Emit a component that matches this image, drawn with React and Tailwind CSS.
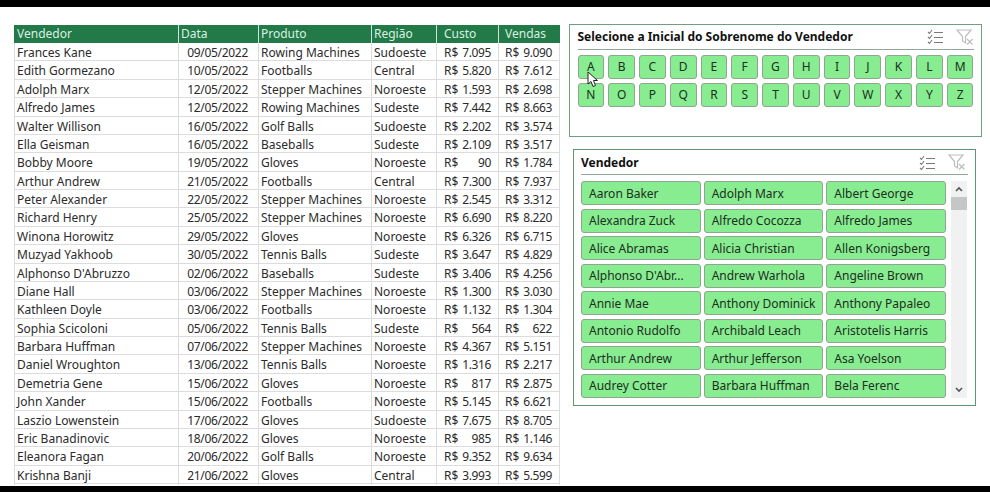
import React from 'react'

const rows = [
  ['Frances Kane', '09/05/2022', 'Rowing Machines', 'Sudoeste', '7.095', '9.090'],
  ['Edith Gormezano', '10/05/2022', 'Footballs', 'Central', '5.820', '7.612'],
  ['Adolph Marx', '12/05/2022', 'Stepper Machines', 'Noroeste', '1.593', '2.698'],
  ['Alfredo James', '12/05/2022', 'Rowing Machines', 'Sudeste', '7.442', '8.663'],
  ['Walter Willison', '16/05/2022', 'Golf Balls', 'Sudoeste', '2.202', '3.574'],
  ['Ella Geisman', '16/05/2022', 'Baseballs', 'Sudeste', '2.109', '3.517'],
  ['Bobby Moore', '19/05/2022', 'Gloves', 'Noroeste', '90', '1.784'],
  ['Arthur Andrew', '21/05/2022', 'Footballs', 'Central', '7.300', '7.937'],
  ['Peter Alexander', '22/05/2022', 'Stepper Machines', 'Noroeste', '2.545', '3.312'],
  ['Richard Henry', '25/05/2022', 'Stepper Machines', 'Noroeste', '6.690', '8.220'],
  ['Winona Horowitz', '29/05/2022', 'Gloves', 'Noroeste', '6.326', '6.715'],
  ['Muzyad Yakhoob', '30/05/2022', 'Tennis Balls', 'Sudeste', '3.647', '4.829'],
  ["Alphonso D'Abruzzo", '02/06/2022', 'Baseballs', 'Sudeste', '3.406', '4.256'],
  ['Diane Hall', '03/06/2022', 'Stepper Machines', 'Noroeste', '1.300', '3.030'],
  ['Kathleen Doyle', '03/06/2022', 'Footballs', 'Noroeste', '1.132', '1.304'],
  ['Sophia Scicoloni', '05/06/2022', 'Tennis Balls', 'Sudeste', '564', '622'],
  ['Barbara Huffman', '07/06/2022', 'Stepper Machines', 'Noroeste', '4.367', '5.151'],
  ['Daniel Wroughton', '13/06/2022', 'Tennis Balls', 'Noroeste', '1.316', '2.217'],
  ['Demetria Gene', '15/06/2022', 'Gloves', 'Noroeste', '817', '2.875'],
  ['John Xander', '15/06/2022', 'Footballs', 'Noroeste', '5.145', '6.621'],
  ['Laszio Lowenstein', '17/06/2022', 'Gloves', 'Sudoeste', '7.675', '8.705'],
  ['Eric Banadinovic', '18/06/2022', 'Gloves', 'Noroeste', '985', '1.146'],
  ['Eleanora Fagan', '20/06/2022', 'Golf Balls', 'Noroeste', '9.352', '9.634'],
  ['Krishna Banji', '21/06/2022', 'Gloves', 'Central', '3.993', '5.599'],
]

const letters = 'ABCDEFGHIJKLMNOPQRSTUVWXYZ'.split('')

const sellers = [
  'Aaron Baker', 'Adolph Marx', 'Albert George',
  'Alexandra Zuck', 'Alfredo Cocozza', 'Alfredo James',
  'Alice Abramas', 'Alicia Christian', 'Allen Konigsberg',
  "Alphonso D'Abr...", 'Andrew Warhola', 'Angeline Brown',
  'Annie Mae', 'Anthony Dominick', 'Anthony Papaleo',
  'Antonio Rudolfo', 'Archibald Leach', 'Aristotelis Harris',
  'Arthur Andrew', 'Arthur Jefferson', 'Asa Yoelson',
  'Audrey Cotter', 'Barbara Huffman', 'Bela Ferenc',
]

const colClass = 'grid grid-cols-[165px_80px_113px_65px_62px_61px]'

function MultiSelectIcon() {
  return (
    <svg width="18" height="16" viewBox="0 0 18 16" fill="none" stroke="#7a7a7a" strokeWidth="1.1">
      <path d="M1 3 L2.5 4.5 L5 1" />
      <path d="M1 8 L2.5 9.5 L5 6" />
      <path d="M1 13 L2.5 14.5 L5 11" />
      <path d="M7 3.5 H16 M7 8.5 H16 M7 13.5 H16" />
    </svg>
  )
}

function ClearFilterIcon() {
  return (
    <svg width="18" height="17" viewBox="0 0 18 17" fill="none" stroke="#bdbdbd" strokeWidth="1.2">
      <path d="M1 1 H15 L9.5 7.5 V14 L6.5 12 V7.5 Z" />
      <path d="M11 10 L16.5 15.5 M16.5 10 L11 15.5" />
    </svg>
  )
}

function SlicerHeader({ title, className }) {
  return (
    <div className={`flex h-[23px] items-center justify-between border-b border-[#8fa897] pb-[1px] ${className}`}>
      <span className="text-[12px] font-bold text-[#111]">{title}</span>
      <div className="flex items-center gap-[11px]">
        <MultiSelectIcon />
        <ClearFilterIcon />
      </div>
    </div>
  )
}

const btnClass = 'rounded-[3px] border border-[#8ea68f] bg-[#88ec90] text-[#1c2f22]'
const cellLine = 'border-r border-[#dcdcdc] pt-[1px]'

export default function App() {
  return (
    <div className="flex h-[492px] w-[990px] flex-col overflow-hidden bg-white font-['Noto_Sans',sans-serif]">
      <div className="h-[7px] shrink-0 bg-black" />

      <div className="flex min-h-0 flex-1 overflow-hidden pl-[14px] pt-[18px]">
        {/* Planilha */}
        <div className="w-[546px] shrink-0 text-[12px] text-[#2b2b2b]">
          <div className={`${colClass} h-[18px] bg-[#217a47] text-[#dcefe2]`}>
            <div className="flex items-center border-r border-[#cfe3d6] pl-[3px]">Vendedor</div>
            <div className="flex items-center border-r border-[#cfe3d6] pl-[2px]">Data</div>
            <div className="flex items-center border-r border-[#cfe3d6] pl-[2px]">Produto</div>
            <div className="flex items-center border-r border-[#cfe3d6] pl-[2px]">Região</div>
            <div className="flex items-center border-r border-[#cfe3d6] pl-[7px]">Custo</div>
            <div className="flex items-center pl-[6px]">Vendas</div>
          </div>
          {rows.map((r) => (
            <div key={r[0]} className={`${colClass} h-[18.39px] border-b border-[#dcdcdc]`}>
              <div className={`flex items-center border-l pl-[2px] ${cellLine}`}>{r[0]}</div>
              <div className={`flex items-center justify-end pr-[10px] tracking-[-0.3px] ${cellLine}`}>{r[1]}</div>
              <div className={`flex items-center pl-[2px] ${cellLine}`}>{r[2]}</div>
              <div className={`flex items-center pl-[2px] ${cellLine}`}>{r[3]}</div>
              <div className={`flex items-center justify-between pl-[7px] pr-[7px] ${cellLine}`}>
                <span>R$</span>
                <span className="tracking-[-0.4px]">{r[4]}</span>
              </div>
              <div className={`flex items-center justify-between pl-[6px] pr-[7px] ${cellLine}`}>
                <span>R$</span>
                <span className="tracking-[-0.4px]">{r[5]}</span>
              </div>
            </div>
          ))}
        </div>

        {/* Segmentacoes */}
        <div className="flex flex-col">
          <div className="relative -mt-[1px] ml-[9px] h-[113px] w-[413px] border-[1.5px] border-[#6f9f80] px-[7.5px] pt-[1.5px]">
            <SlicerHeader title="Selecione a Inicial do Sobrenome do Vendedor" />
            <div className="mt-[5px] grid grid-cols-13 gap-[4px]">
              {letters.map((l) => (
                <div key={l} className={`${btnClass} flex h-[24px] items-center justify-center text-[12px]`}>
                  {l}
                </div>
              ))}
            </div>
            {/* Cursor */}
            <svg className="absolute left-[16.5px] top-[45.5px]" width="12" height="18" viewBox="0 0 12 18">
              <path d="M1 1 L1 13 L4 10.5 L6 15.5 L8.5 14.5 L6.5 9.5 L10.5 9.5 Z" fill="#fff" stroke="#222" strokeWidth="1" />
            </svg>
          </div>

          <div className="ml-[13px] mt-[12px] h-[257px] w-[403px] border border-[#5f9474] px-[7px] pt-[2px]">
            <SlicerHeader title="Vendedor" className="[&>div]:pr-[2px]" />
            <div className="mt-[6px] flex gap-[5px]">
              <div className="grid w-[365px] grid-cols-3 gap-x-[3px] gap-y-[3.5px]">
                {sellers.map((s) => (
                  <div key={s} className={`${btnClass} flex h-[24px] items-center overflow-hidden whitespace-nowrap pl-[7px] pt-[1px] text-[12px]`}>
                    {s}
                  </div>
                ))}
              </div>
              <div className="flex h-[217px] w-[16px] flex-col items-center bg-[#f1f1f1]">
                <svg className="mt-[5px]" width="8" height="6" viewBox="0 0 8 6" fill="none" stroke="#555" strokeWidth="1.6">
                  <path d="M1 5 L4 2 L7 5" />
                </svg>
                <div className="mt-[5px] h-[13px] w-full bg-[#c6c6c6]" />
                <svg className="mt-auto mb-[5px]" width="8" height="6" viewBox="0 0 8 6" fill="none" stroke="#555" strokeWidth="1.6">
                  <path d="M1 1 L4 4 L7 1" />
                </svg>
              </div>
            </div>
          </div>
        </div>
      </div>

      <div className="h-[6px] shrink-0 bg-black" />
    </div>
  )
}
